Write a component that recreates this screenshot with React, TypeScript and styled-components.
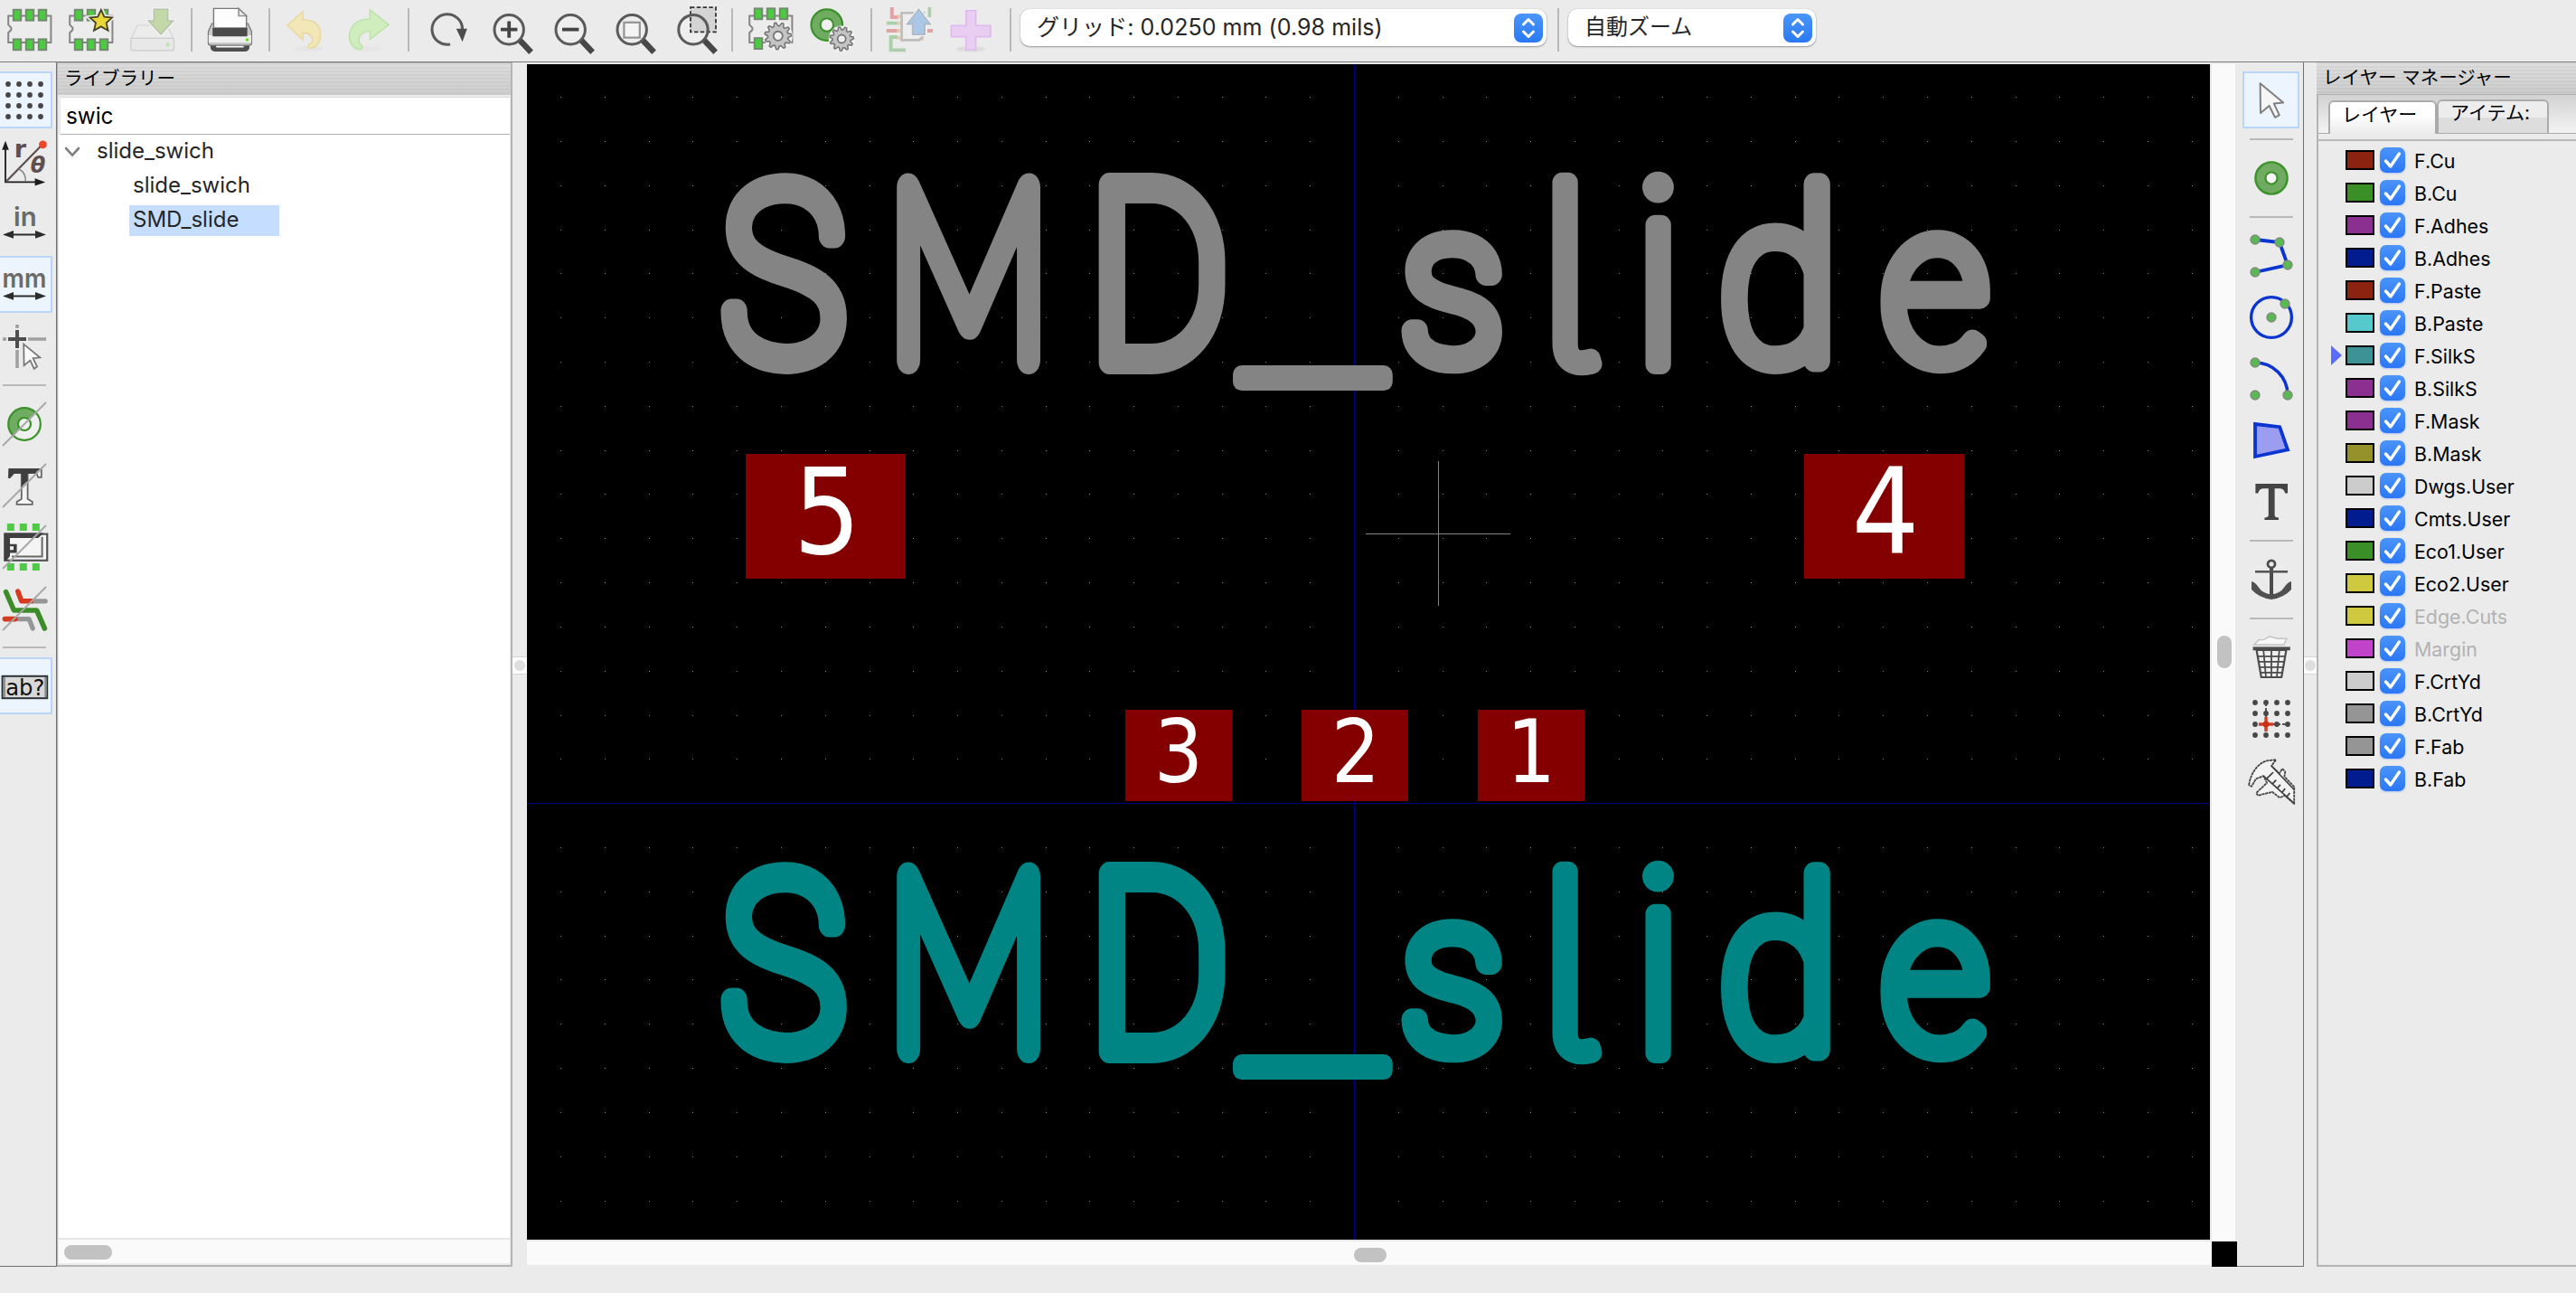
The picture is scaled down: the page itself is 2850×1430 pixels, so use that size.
import React from 'react';
import styled, { createGlobalStyle } from 'styled-components';

const UI_FONT = `Inter, "Noto Sans CJK JP", sans-serif`;

const GlobalStyle = createGlobalStyle`
  html, body { margin: 0; padding: 0; background: #ebebeb; }
  body { font-family: ${UI_FONT}; color: #1f1f1f; overflow: hidden; }
  * { box-sizing: border-box; }
`;

/* ---------- window frame ---------- */

const Window = styled.div`
  width: 2850px;
  height: 1430px;
  display: flex;
  flex-direction: column;
  background: #ebebeb;
`;

const TopBar = styled.header`
  height: 69px;
  flex: none;
  display: flex;
  align-items: flex-start;
  padding: 7px 0 0 6px;
  margin-left: -8px;
  border-bottom: 1px solid #7b7b7b;
`;

const Main = styled.main`
  height: 1332px;
  flex: none;
  display: flex;
`;

const IconSvg = styled.svg`
  width: 52px;
  height: 52px;
  display: block;
  flex: none;
  overflow: visible;
`;

const TopTool = styled.div<{ $dim?: boolean }>`
  margin: 0 8px;
  opacity: ${(p) => (p.$dim ? 0.4 : 1)};
`;

const TopSeparator = styled.div`
  width: 2px;
  height: 48px;
  margin: 2px 7px 0 9px;
  background: #b9b9b9;
`;

const Combo = styled.div<{ $width: number }>`
  width: ${(p) => p.$width}px;
  height: 41px;
  margin: 3px 3px 0;
  padding: 0 4px 0 18px;
  display: flex;
  align-items: center;
  justify-content: space-between;
  border-radius: 10px;
  background: #fff;
  box-shadow: 0 1px 2px rgba(0, 0, 0, 0.35), 0 0 1px rgba(0, 0, 0, 0.25);
  color: #262626;
  white-space: nowrap;
`;

const ComboText = styled.span<{ $size: number; $spacing: number }>`
  font-size: ${(p) => p.$size}px;
  letter-spacing: ${(p) => p.$spacing}px;
  line-height: 38px;
  padding-bottom: 2px;
`;

const Stepper = styled.svg`
  width: 32px;
  height: 32px;
  border-radius: 8px;
  background: linear-gradient(#4a96f8, #2a78f6);
`;

/* ---------- side tool strips ---------- */

const SideBar = styled.nav<{ $side: 'left' | 'right' }>`
  flex: none;
  width: ${(p) => (p.$side === 'left' ? 63 : 74)}px;
  padding: 10px 0 0 ${(p) => (p.$side === 'left' ? 0 : 2)}px;
  display: flex;
  flex-direction: column;
  align-items: ${(p) => (p.$side === 'left' ? 'flex-start' : 'center')};
  border-right: 1px solid #6f6f6f;
  border-bottom: 1px solid #6f6f6f;
`;

const SideTool = styled.div<{ $active?: boolean; $side: 'left' | 'right' }>`
  width: ${(p) => (p.$side === 'left' ? 58 : 63)}px;
  height: 63px;
  margin-bottom: 5px;
  display: flex;
  align-items: center;
  justify-content: center;
  padding: 0 ${(p) => (p.$side === 'left' ? 2 : 0)}px 0 0;
  border: 2px solid ${(p) => (p.$active ? '#b9d5f7' : 'transparent')};
  border-left-width: ${(p) => (p.$side === 'left' ? 0 : 2)}px;
  background: ${(p) => (p.$active ? '#ecf4fe' : 'transparent')};
`;

const SideSeparator = styled.div<{ $side: 'left' | 'right' }>`
  width: 48px;
  height: 2px;
  margin: 6px 0 10px ${(p) => (p.$side === 'left' ? 3 : 0)}px;
  background: #b9b9b9;
`;

/* ---------- library panel ---------- */

const LibraryPanel = styled.section`
  flex: none;
  width: 504px;
  display: flex;
  flex-direction: column;
  border: 1px solid #b4b4b4;
  border-width: 1px 2px 2px 1px;
  background: #ebebeb;
`;

const PanelTitle = styled.div<{ $indent: number }>`
  height: 35px;
  flex: none;
  padding-left: ${(p) => p.$indent}px;
  font-size: 20.5px;
  line-height: 34px;
  color: #000;
  background:
    repeating-linear-gradient(rgba(0, 0, 0, 0.035) 0 2px, transparent 2px 4px),
    linear-gradient(#dedede, #cdcdcd);
`;

const SearchField = styled.div`
  height: 42px;
  flex: none;
  margin: 2px 1px 0 3px;
  padding-left: 6px;
  background: #fff;
  border-top: 1px solid #dcdcdc;
  border-bottom: 1px solid #b0b0b0;
  font-size: 24.3px;
  line-height: 41px;
  color: #000;
`;

const Tree = styled.div`
  flex: 1;
  margin: 0 1px;
  background: #fff;
  color: #262626;
`;

const TreeRow = styled.div<{ $indent: number }>`
  height: 38px;
  padding-left: ${(p) => p.$indent}px;
  display: flex;
  align-items: center;
`;

const Chevron = styled.svg`
  width: 18px;
  height: 12px;
  margin-right: 14px;
`;

const TreeLabel = styled.span<{ $selected?: boolean }>`
  height: 34px;
  width: ${(p) => (p.$selected ? '166px' : 'auto')};
  padding: 0 4px;
  font-size: 24px;
  line-height: 32px;
  background: ${(p) => (p.$selected ? '#c5deff' : 'transparent')};
`;

const ListScroll = styled.div`
  height: 30px;
  flex: none;
  margin: 0 1px;
  padding: 6px 0 0 6px;
  border-top: 2px solid #e6e6e6;
  border-bottom: 2px solid #ededed;
  background: #fafafa;
`;

const Thumb = styled.div<{ $w: number; $h: number }>`
  width: ${(p) => p.$w}px;
  height: ${(p) => p.$h}px;
  border-radius: 8px;
  background: #c2c2c2;
`;

/* ---------- splitters ---------- */

const Splitter = styled.div<{ $width: number }>`
  flex: none;
  width: ${(p) => p.$width}px;
  padding-top: 657px;
`;

const SplitterGrip = styled.div`
  height: 20px;
  display: flex;
  align-items: center;
  justify-content: center;
  background: #fcfcfc;
  border-top: 1px solid #d5d5d5;
  border-bottom: 1px solid #d5d5d5;
  &::after {
    content: '';
    width: 12px;
    height: 12px;
    border-radius: 6px;
    background: #dedede;
  }
`;

/* ---------- drawing area ---------- */

const DrawingArea = styled.section`
  flex: none;
  width: 1892px;
  padding-top: 2px;
  display: grid;
  grid-template-columns: 1864px 28px;
  grid-template-rows: 1302px 28px;
`;

const Viewport = styled.div`
  border-right: 2px solid #e9e9e9;
  border-bottom: 2px solid #e6e6e6;
`;

const Board = styled.svg`
  width: 1862px;
  height: 1300px;
  display: block;
  background: #000;
`;

const VScroll = styled.div`
  padding: 632px 0 0 6px;
  background: #fafafa;
  border-right: 2px solid #ebebeb;
`;

const HScroll = styled.div`
  padding: 7px 0 0 915px;
  background: #fafafa;
  border-bottom: 2px solid #ebebeb;
`;

const Corner = styled.div`
  background: #000;
`;

const PadNumber = styled.text`
  font-family: "DejaVu Sans", sans-serif;
  fill: #fff;
  text-anchor: middle;
`;

/* ---------- layer manager ---------- */

const LayerPanel = styled.aside`
  flex: 1;
  display: flex;
  flex-direction: column;
  border-bottom: 2px solid #b4b4b4;
`;

const LayerBody = styled.div`
  flex: 1;
  border-left: 2px solid #b4b4b4;
`;

const TabStrip = styled.div`
  height: 44px;
  display: flex;
  align-items: flex-end;
  padding-left: 11px;
  border-top: 1px solid #b0b0b0;
  border-bottom: 1px solid #ababab;
  background: linear-gradient(#d2d2d2, #f3f3f3);
`;

const Tab = styled.div<{ $active?: boolean; $width: number; $indent: number }>`
  width: ${(p) => p.$width}px;
  height: 37px;
  margin-bottom: ${(p) => (p.$active ? -1 : 0)}px;
  padding-left: ${(p) => p.$indent}px;
  border: 2px solid #ababab;
  border-bottom: 0;
  border-radius: 6px 6px 0 0;
  font-size: 21px;
  line-height: ${(p) => (p.$active ? 28 : 25)}px;
  white-space: nowrap;
  color: #000;
  background: ${(p) =>
    p.$active
      ? 'linear-gradient(#ffffff 40%, #ebebeb)'
      : 'linear-gradient(#ededed 50%, #dddddd 50%)'};
`;

const TabRule = styled.div`
  height: 8px;
  border-bottom: 2px solid #b8b8b8;
  margin-bottom: 3px;
`;

const LayerRow = styled.div`
  height: 36px;
  display: flex;
  align-items: center;
  padding-left: 14px;
`;

const CurrentMark = styled.div<{ $on?: boolean }>`
  width: 12px;
  height: 22px;
  margin-right: 4px;
  background: ${(p) => (p.$on ? '#5a6bff' : 'transparent')};
  clip-path: polygon(0 0, 100% 50%, 0 100%);
`;

const Swatch = styled.div<{ $color: string }>`
  width: 32px;
  height: 22px;
  margin-right: 6px;
  border: 2px solid #000;
  background: ${(p) => p.$color};
`;

const CheckBox = styled.svg`
  width: 28px;
  height: 28px;
  margin-right: 10px;
  border-radius: 7px;
  background: linear-gradient(#4a94f9, #2b77f6);
  box-shadow: 0 1px 2px rgba(60, 120, 240, 0.35);
`;

const LayerName = styled.span<{ $muted?: boolean }>`
  font-size: 21.4px;
  line-height: 34px;
  padding-top: 1px;
  color: ${(p) => (p.$muted ? '#b2b2b2' : '#000')};
`;

/* ---------- icon drawings (26 unit grid) ---------- */

const Icon = ({ children }: { children: React.ReactNode }) => (
  <IconSvg viewBox="0 0 26 26" fill="none">
    {children}
  </IconSvg>
);

const Gear = ({ cx, cy, r }: { cx: number; cy: number; r: number }) => {
  const pts: string[] = [];
  for (let i = 0; i < 44; i++) {
    const a = (i / 44) * Math.PI * 2 - Math.PI / 22;
    const k = i % 4 < 2 ? r : r * 0.76;
    pts.push(`${(cx + Math.cos(a) * k).toFixed(2)},${(cy + Math.sin(a) * k).toFixed(2)}`);
  }
  return (
    <g>
      <circle cx={cx} cy={cy} r={r + 0.6} fill="#f4f4f4" />
      <polygon points={pts.join(' ')} fill="#c4c4c4" stroke="#777" strokeWidth={0.8} strokeLinejoin="round" />
      <circle cx={cx} cy={cy} r={r * 0.34} fill="#f0f0f0" stroke="#777" strokeWidth={0.9} />
    </g>
  );
};

const Chip = () => (
  <g>
    <path d="M1.6 5.3H25.2V20H1.6V14.6L3.2 13L3.2 11.8L1.6 10.2Z" fill="#ececec" stroke="#858585" strokeWidth={1} />
    {[4.4, 11.4, 18.4].map((x) => (
      <g key={x} fill="#4bcb3f" stroke="#728a6e" strokeWidth={1}>
        <rect x={x} y={1.9} width={4.2} height={5.9} />
        <rect x={x} y={18.2} width={4.2} height={5.9} />
      </g>
    ))}
  </g>
);

const ChipIcon = () => (
  <Icon>
    <Chip />
  </Icon>
);

const ChipStarIcon = () => (
  <Icon>
    <Chip />
    <path
      d="M18.9 1.4L20.7 5.8L25.2 6.2L21.8 9.2L22.9 13.8L18.9 11.4L14.9 13.8L16 9.2L12.6 6.2L17.1 5.8Z"
      fill="#e9d838"
      stroke="#ebebeb"
      strokeWidth={2.4}
    />
    <path
      d="M18.9 1.9L20.7 5.8L25 6.2L21.8 9.2L22.8 13.4L18.9 11.2L15 13.4L16 9.2L12.8 6.2L17.1 5.8Z"
      fill="#e9d838"
      stroke="#45411f"
      strokeWidth={0.9}
    />
  </Icon>
);

const SaveIcon = () => (
  <Icon>
    <path d="M5 10.5H21.5L25 18H1.5Z" fill="#efefef" stroke="#b5b5b5" strokeWidth={0.6} />
    <rect x={1.4} y={17.6} width={23.8} height={6.8} rx={1} fill="#e4e4e4" stroke="#aaa" strokeWidth={0.7} />
    <rect x={20.8} y={20.2} width={2} height={2} fill="#6fe05c" />
    <path d="M14.2 1.6H21.8V8H24.8L18 15.4L11.2 8H14.2Z" fill="#93cc55" stroke="#fff" strokeWidth={2} />
    <path d="M14.2 1.6H21.8V8H24.8L18 15.4L11.2 8H14.2Z" fill="#86bf44" stroke="#6a8a4a" strokeWidth={0.8} />
  </Icon>
);

const PrinterIcon = () => (
  <Icon>
    <path d="M2.4 20.5H24V22.5C24 24.5 22.5 25 21 25H5.5C4 25 2.4 24.5 2.4 22.5Z" fill="#4e4e4e" />
    <path d="M5 19.5H21.4L21 23H5.4Z" fill="#fafafa" stroke="#555" strokeWidth={0.6} />
    <path d="M3.2 9.5L1.2 14V20.3Q1.2 21.6 2.6 21.6H23.8Q25.2 21.6 25.2 20.3V14L23.2 9.5Z" fill="#c9c9c9" stroke="#777" strokeWidth={0.6} />
    <rect x={1.4} y={16} width={23.6} height={4} fill="#efefef" />
    <path d="M4 9.3H22.4V13.6H4Z" fill="#3c3c3c" />
    <path d="M4.2 12V1.2H18L22.3 5.3V12H4.2Z" fill="#fdfdfd" stroke="#777" strokeWidth={0.7} />
    <path d="M3.6 12H22.8V16.6H3.6Z" fill="#4a4a4a" />
    <path d="M18 1.2V5.3H22.3Z" fill="#e6e6e6" stroke="#888" strokeWidth={0.7} />
    <circle cx={22.7} cy={18.5} r={0.9} fill="#6bdd20" />
  </Icon>
);

const UndoIcon = () => (
  <Icon>
    <ellipse cx={14} cy={23.4} rx={8} ry={1.6} fill="#cfcfcf" opacity={0.5} />
    <path
      d="M2 10.5L10.5 3V7.4C17.5 7.4 20.3 11 20.3 16C20.3 20 18 22.5 14.8 23.2C13.3 23.4 13 21.6 14.3 21C16.6 19.8 17.2 15 10.5 14.6V18.4Z"
      fill="#fde36a"
      stroke="#e8bd2c"
      strokeWidth={0.8}
    />
  </Icon>
);

const RedoIcon = () => (
  <Icon>
    <ellipse cx={12} cy={23.4} rx={8} ry={1.6} fill="#cfcfcf" opacity={0.4} />
    <path
      d="M24 10.2L13.7 2V7C6 7 2.3 11.5 2.3 16.5C2.3 20.5 4.4 23 7.8 23.8C9.6 24 9.8 22 8.6 21.2C6.4 19.2 7.4 14 13.7 13.6V18.2Z"
      fill="#a8f07c"
      stroke="#7bd94c"
      strokeWidth={0.8}
    />
  </Icon>
);

const RefreshIcon = () => (
  <Icon>
    <path d="M15 21A8.4 8.4 0 1 1 21.8 13" stroke="#5a5a5a" strokeWidth={1.5} />
    <path d="M18.4 12.4H24.4L21.8 19.6Z" fill="#4d4d4d" />
  </Icon>
);

const LensHandle = () => <path d="M19.2 18.4L25.8 25.4" stroke="#474747" strokeWidth={3.2} />;

const Lens = () => (
  <g>
    <LensHandle />
    <circle cx={13.6} cy={12.9} r={8.1} fill="#eeeeee" stroke="#5a5a5a" strokeWidth={1.5} />
  </g>
);

const ZoomInIcon = () => (
  <Icon>
    <Lens />
    <path d="M13.6 8.2V17.4M9 12.8H18.2" stroke="#444" strokeWidth={1.9} />
  </Icon>
);
const ZoomOutIcon = () => (
  <Icon>
    <Lens />
    <path d="M9 12.8H18.2" stroke="#444" strokeWidth={1.9} />
  </Icon>
);
const ZoomFitIcon = () => (
  <Icon>
    <Lens />
    <rect x={9.2} y={8.9} width={8.7} height={8.4} fill="#f4f4f4" stroke="#949494" strokeWidth={1.1} />
  </Icon>
);
const ZoomAreaIcon = () => (
  <Icon>
    <LensHandle />
    <circle cx={13.5} cy={12.9} r={8.1} fill="#eeeeee" />
    <rect x={12} y={0.6} width={14} height={13.6} fill="#d4d4d4" stroke="#333" strokeWidth={0.9} strokeDasharray="2.2 1.2" />
    <circle cx={13.5} cy={12.9} r={8.1} stroke="#5a5a5a" strokeWidth={1.5} />
  </Icon>
);

const ChipGearIcon = () => (
  <Icon>
    <path d="M1.6 5.3H25.2V20H1.6V14.6L3.2 13L3.2 11.8L1.6 10.2Z" fill="#ececec" stroke="#858585" strokeWidth={1} />
    {[4.4, 11.4, 18.4].map((x) => (
      <rect key={x} x={x} y={1.2} width={4.2} height={5.9} fill="#4bcb3f" stroke="#728a6e" strokeWidth={1} />
    ))}
    <rect x={4.4} y={17.6} width={4.2} height={5.9} fill="#4bcb3f" stroke="#728a6e" strokeWidth={1} />
    <Gear cx={17.4} cy={16.4} r={7.4} />
  </Icon>
);

const PadGearIcon = () => (
  <Icon>
    <circle cx={10.4} cy={10.3} r={6.1} stroke="#3c922a" strokeWidth={6.2} />
    <circle cx={10.4} cy={10.3} r={6.1} stroke="#6fab60" strokeWidth={4} />
    <circle cx={10.4} cy={10.3} r={3} fill="#f0f0f0" />
    <Gear cx={18.6} cy={18} r={6.6} />
  </Icon>
);

const ExportIcon = () => (
  <Icon>
    <path d="M3.4 0.5V6H7" stroke="#d23c3c" strokeWidth={2} />
    <path d="M24.2 0.5V6" stroke="#4ca64c" strokeWidth={1.8} />
    <path d="M0.4 9.3H6.4M11 24.2H2.8V17H6.6" stroke="#4ca64c" strokeWidth={1.9} />
    <path d="M0.4 13.5H6.4M23 13.5H26" stroke="#d23c3c" strokeWidth={1.9} />
    <path d="M6.4 5.6H9M6.4 9.3H9M6.4 13.5H9M6.4 17.4H9M17 18H21" stroke="#f09a4a" strokeWidth={1.9} />
    <path d="M8.8 3.6H21V16L18.5 18.7H8.8Z" fill="#f2f2f2" stroke="#7a7a7a" strokeWidth={1.3} />
    <path d="M18.2 1.6L24.6 9.8H21.6V15.6H14.8V9.8H11.8Z" fill="#4c93e0" stroke="#fff" strokeWidth={2} />
    <path d="M18.2 1.6L24.6 9.8H21.6V15.6H14.8V9.8H11.8Z" fill="#4c93e0" stroke="#596f88" strokeWidth={0.8} />
  </Icon>
);

const PlusIcon = () => (
  <Icon>
    <ellipse cx={13} cy={23.6} rx={8} ry={1.6} fill="#cfcfcf" opacity={0.5} />
    <path d="M10.4 2.4H15.8V10.6H24V16.8H15.8V24H10.4V16.8H2.2V10.6H10.4Z" fill="#e8cff2" stroke="#dfb9ee" strokeWidth={0.8} />
  </Icon>
);

/* dotted grid used by the grid and origin tools */
const Dots = ({ at }: { at: number[] }) => (
  <g fill="#474747">
    {at.map((x) => at.map((y) => <circle key={`${x}-${y}`} cx={x} cy={y} r={1.45} />))}
  </g>
);

const GridIcon = () => (
  <Icon>
    <Dots at={[4, 10, 16, 22]} />
  </Icon>
);

const IconText = styled.text<{ $color: string; $weight?: number; $face?: string }>`
  font-family: ${(p) => p.$face ?? '"DejaVu Sans"'}, sans-serif;
  font-weight: ${(p) => p.$weight ?? 400};
  fill: ${(p) => p.$color};
`;

const PolarIcon = () => (
  <Icon>
    <path d="M2.5 3V24.2H21" stroke="#1c1c1c" strokeWidth={0.9} />
    <path d="M0.6 6.4L2.5 1.4L4.4 6.4ZM18.8 22.1L24.6 24.2L18.8 26.3Z" fill="#1c1c1c" />
    <path d="M2.8 24L22 4.4" stroke="#5e5050" strokeWidth={1.1} />
    <path d="M9.8 16.8Q14 19 13.6 24" stroke="#777" strokeWidth={0.7} />
    <circle cx={23.2} cy={3.4} r={2.2} fill="#f0442b" />
    <IconText x={7.4} y={10.6} fontSize={13.5} $color="#5e5050" $weight={700}>r</IconText>
    <IconText x={16.4} y={19.2} fontSize={12} $color="#5e5050" $weight={700} fontStyle="italic">θ</IconText>
  </Icon>
);

const UnitArrow = () => (
  <g>
    <path d="M4 19.2H22" stroke="#2c2c2c" strokeWidth={1} />
    <path d="M1 19.2L7 17V21.4ZM25 19.2L19 17V21.4Z" fill="#2c2c2c" />
  </g>
);

const InchIcon = () => (
  <Icon>
    <UnitArrow />
    <IconText x={7} y={14.6} fontSize={14.5} $color="#6a6a6a" $weight={600} $face="Inter" textLength={12.8} lengthAdjust="spacingAndGlyphs">in</IconText>
  </Icon>
);
const MmIcon = () => (
  <Icon>
    <UnitArrow />
    <IconText x={0.8} y={14.7} fontSize={14.5} $color="#6a6a6a" $weight={600} $face="Inter" textLength={24.4} lengthAdjust="spacingAndGlyphs">mm</IconText>
  </Icon>
);

const CursorShapeIcon = () => (
  <Icon>
    <path d="M1 9H3M15 9H25M9 1V3M9 15V25" stroke="#a0a0a0" strokeWidth={1.8} />
    <path d="M4 9H14M9 4V14" stroke="#4d4d4d" strokeWidth={2} />
    <path d="M12.6 11.8L21.6 19.2L17.8 19.6L20 24.2L18.4 25.4L16.2 20.8L12.8 23.6Z" fill="#fafafa" stroke="#777" strokeWidth={0.9} />
  </Icon>
);

const Slash = () => <path d="M1 25L25 1" stroke="#a6a6a6" strokeWidth={0.9} />;

const PadSketchIcon = () => (
  <Icon>
    <circle cx={13} cy={13} r={8.9} fill="#f0f0f0" />
    <path d="M6.6 19.4A9 9 0 0 1 19.4 6.6Z" fill="#6fab60" />
    <circle cx={13} cy={13} r={8.9} stroke="#3c922a" strokeWidth={1.1} />
    <circle cx={13} cy={13} r={3.5} fill="#f0f0f0" stroke="#3c922a" strokeWidth={1.1} />
    <Slash />
  </Icon>
);

const TextSketchIcon = () => (
  <Icon>
    <path d="M4.6 4H22.4V8.4H20.6L19.6 6H14.8V20.4L17.4 22V23.4H8.8V22L11.4 20.4V6H7.2L5 8.4H4.4Z" fill="#f4f4f4" stroke="#666" strokeWidth={0.9} />
    <path d="M4.4 3.6H21.6L18.6 6.4H14.8V10.4L11.4 13.6V6.4H7.4L4.9 9H4.2Z" fill="#3f3f3f" />
    <Slash />
  </Icon>
);

const OutlineSketchIcon = () => (
  <Icon>
    {[3.4, 10.4, 17.4].map((x) => (
      <g key={x} fill="#52c848">
        <rect x={x} y={0} width={4} height={4} />
        <rect x={x} y={22} width={4} height={4} />
      </g>
    ))}
    <rect x={2.2} y={5.8} width={23.4} height={14.6} fill="#f4f4f4" stroke="#555" strokeWidth={1.1} />
    <path d="M22.8 7.4V18.2H6" stroke="#666" strokeWidth={1} />
    <path d="M1.8 5.2H23.6L20.6 8H5V11.4H8.8V16.2H5V18L3 20.6H1.8Z" fill="#3f3f3f" />
    <rect x={5} y={12.6} width={2} height={2} fill="#eee" />
    <Slash />
  </Icon>
);

const TrackSketchIcon = () => (
  <Icon>
    <path d="M17.4 8.9H24.6M10 18.8H15.6L17.6 24" stroke="#969696" strokeWidth={2.6} strokeLinecap="round" strokeLinejoin="round" />
    <path d="M9.4 3.6L11.4 8.9H16.6M2.2 18.8H8" stroke="#d63a20" strokeWidth={2.8} strokeLinecap="round" strokeLinejoin="round" />
    <path d="M2.8 3.8L7.2 14H19.8L24.2 24" stroke="#3d8c2a" strokeWidth={2.8} strokeLinecap="round" strokeLinejoin="round" />
    <Slash />
  </Icon>
);

const AbIcon = () => (
  <Icon>
    <rect x={0.8} y={7.4} width={24.8} height={12.2} fill="#d8d8d8" stroke="#2b3234" strokeWidth={1} />
    <path d="M1.9 8V19M24.7 8V19" stroke="#8b9193" strokeWidth={1.2} />
    <IconText x={2.6} y={17.8} fontSize={12} $color="#111" textLength={21.6} lengthAdjust="spacingAndGlyphs">ab?</IconText>
  </Icon>
);

const ArrowIcon = () => (
  <Icon>
    <path d="M6.8 3.6L19.6 14.2L14.4 14.8L17.4 21.2L15 22.4L11.8 16L7 20Z" fill="#f6f6f6" stroke="#808080" strokeWidth={1} strokeLinejoin="round" />
  </Icon>
);

const PadIcon = () => (
  <Icon>
    <circle cx={13} cy={13} r={6} stroke="#3c922a" strokeWidth={6.8} />
    <circle cx={13} cy={13} r={6} stroke="#6fab60" strokeWidth={4.4} />
    <circle cx={13} cy={13} r={2.7} fill="#f6f6f6" />
  </Icon>
);

const Node = ({ x, y }: { x: number; y: number }) => (
  <circle cx={x} cy={y} r={2.4} fill="#57bb52" stroke="#7f8f7c" strokeWidth={0.9} />
);

const LineIcon = () => (
  <Icon>
    <path d="M4 4L17.5 5.5L22 18L4 22" stroke="#0a35d0" strokeWidth={1.9} />
    <Node x={4} y={4} />
    <Node x={17.5} y={5.5} />
    <Node x={22} y={18} />
    <Node x={4} y={22} />
  </Icon>
);
const CircleIcon = () => (
  <Icon>
    <circle cx={13} cy={13} r={11.2} stroke="#0a35d0" strokeWidth={1.7} />
    <Node x={13} y={13} />
    <Node x={20.5} y={5.5} />
  </Icon>
);
const ArcIcon = () => (
  <Icon>
    <path d="M4 4A18 18 0 0 1 22 22" stroke="#0a35d0" strokeWidth={1.8} />
    <Node x={4} y={4} />
    <Node x={4} y={22} />
    <Node x={22} y={22} />
  </Icon>
);
const PolygonIcon = () => (
  <Icon>
    <path d="M4 4L17.6 5.6L22 18.2L4 22Z" fill="#9a9df0" stroke="#0a35d0" strokeWidth={1.9} />
  </Icon>
);
const TextIcon = () => (
  <Icon>
    <path d="M4.2 3H22V8.2H20.6Q20 5.6 17.4 5.6H14.8V20.4Q14.8 21.6 17 21.8V23H9.2V21.8Q11.4 21.6 11.4 20.4V5.6H8.8Q6.2 5.6 5.6 8.2H4.2Z" fill="#444" />
  </Icon>
);
const AnchorIcon = () => (
  <Icon>
    <circle cx={13} cy={4.4} r={2} stroke="#4c4c4c" strokeWidth={1.4} />
    <path d="M13 6V22" stroke="#4c4c4c" strokeWidth={2} />
    <path d="M4 8.6H22" stroke="#555" strokeWidth={1.3} />
    <path d="M2 14V18.5Q6 23 13 24Q20 23 24 18.5V14Q21.8 14.6 20 17.4Q18 20.6 13 21.2Q8 20.6 6 17.4Q4.2 14.6 2 14Z" fill="#505050" />
  </Icon>
);
const TrashIcon = () => (
  <Icon>
    <path d="M3.4 6L6 3.4L9 3.2L12 1.4L16 2.6H21.4L20 6Z" fill="#f8f8f8" stroke="#c4c4c4" strokeWidth={0.7} />
    <rect x={2.8} y={7.2} width={20.6} height={1.9} fill="#4c4c4c" />
    <path d="M4.8 9L7.4 24H18.6L21.2 9Z" fill="#f0f0f0" stroke="#4c4c4c" strokeWidth={1.1} />
    <path d="M8.6 9L10 24M13 9V24M17.4 9L16 24M5.6 12.4H20.4M6 15.4H20M6.6 18.4H19.4M7 21.4H19" stroke="#4c4c4c" strokeWidth={0.9} />
  </Icon>
);
const OriginIcon = () => (
  <Icon>
    <path d="M10 4V16H22" stroke="#555" strokeWidth={1} strokeDasharray="2 1" />
    <Dots at={[4, 10, 16, 22]} />
    <path d="M6 16H14M10 12V20" stroke="#d63a20" strokeWidth={1.7} />
    <circle cx={10} cy={16} r={1.7} fill="#c83018" />
  </Icon>
);
const CaliperIcon = () => (
  <Icon>
    <path
      d="M0.6 15.6C1.5 9 5.5 3.6 10.4 2.2L15.6 1.6L13 5L17.4 9.2L19 6.6L20.6 8.2L20.2 11L25.6 16.6V26L20.4 21.4L17.6 22.6L13.4 19.4L5.6 21.4L4.6 20L10.6 14.4L8.6 10.6L4.4 12.2L2 16.4Z"
      fill="#f3f3f3"
      stroke="#444"
      strokeWidth={0.9}
      strokeLinejoin="round"
      strokeDasharray="1.6 0.3"
    />
    <path d="M8.6 10.6L25.4 25.6M13 5L25.4 18M10 12.4L14 8.6M13.4 15.2L15.6 12.8M16 17.6L18 15.4M18.6 20L20.6 17.6M21.2 22.4L23.2 20" stroke="#444" strokeWidth={0.9} />
  </Icon>
);

/* ---------- footprint drawing ---------- */

interface Glyph {
  ch: string;
  face: string;
  x0: number;
  x1: number;
  y0: number;
  y1: number;
  /* keeps the glyph's own proportions: aligned to x0, or centred */
  keep?: 'left' | 'center';
  tail?: boolean;
}

/* bounding box of every silkscreen character, in board pixels */
const SILK: Glyph[] = [
  { ch: 'S', face: 'Roboto', x0: 797, x1: 938, y0: 190, y1: 414 },
  { ch: 'M', face: 'Lato', x0: 992, x1: 1151, y0: 190, y1: 414 },
  { ch: 'D', face: 'Roboto', x0: 1215, x1: 1356, y0: 190, y1: 414 },
  { ch: '_', face: 'Inter', x0: 1364, x1: 1542, y0: 404, y1: 433 },
  { ch: 's', face: 'Roboto', x0: 1550, x1: 1663, y0: 255, y1: 414 },
  { ch: 'l', face: 'Inter', x0: 1717, x1: 1746, y0: 190, y1: 414, keep: 'left', tail: true },
  { ch: 'i', face: 'Inter', x0: 1820, x1: 1849, y0: 190, y1: 414, keep: 'center' },
  { ch: 'd', face: 'Roboto', x0: 1903, x1: 2025, y0: 190, y1: 414 },
  { ch: 'e', face: 'Roboto', x0: 2080, x1: 2202, y0: 255, y1: 414 },
];

const LINE = 29; // silkscreen line thickness on the board
const HAIR = 5; // stem of the thin faces at 200px

const SilkGlyph = styled.text<{ $face: string; $tail?: boolean }>`
  font-family: "${(p) => p.$face}", sans-serif;
  font-weight: 100;
  font-size: 200px;
  font-feature-settings: ${(p) => (p.$tail ? '"cv05" 1' : 'normal')};
  stroke-linejoin: round;
  stroke-linecap: round;
`;

const fit = (g: Glyph) => {
  const ctx = document.createElement('canvas').getContext('2d')!;
  ctx.font = `100 200px "${g.face}"`;
  const m = ctx.measureText(g.ch);
  const w = m.actualBoundingBoxRight + m.actualBoundingBoxLeft;
  const h = m.actualBoundingBoxAscent + m.actualBoundingBoxDescent;
  const X = g.x1 - g.x0;
  const Y = g.y1 - g.y0;
  const pen = g.keep ? (LINE * h - HAIR * Y) / (Y - LINE) : (LINE * w - HAIR * X) / (X - LINE);
  const sx = g.keep ? Y / (h + pen) : X / (w + pen);
  const sy = g.ch === '_' ? sx : Y / (h + pen);
  const left =
    g.keep === 'center' ? (g.x0 + g.x1) / 2 - (w * sx) / 2 : g.x0 + (pen * sx) / 2;
  const tx = left + m.actualBoundingBoxLeft * sx;
  const ty = (g.y0 + g.y1) / 2 - (h * sy) / 2 + m.actualBoundingBoxAscent * sy;
  return { transform: `matrix(${sx} 0 0 ${sy} ${tx} ${ty})`, strokeWidth: pen };
};

const SilkText = ({ color, dy }: { color: string; dy: number }) => (
  <g transform={`translate(0 ${dy})`} fill={color} stroke={color}>
    {SILK.map((g, i) => (
      <SilkGlyph key={i} $face={g.face} $tail={g.tail} {...fit(g)}>
        {g.ch}
      </SilkGlyph>
    ))}
  </g>
);

const PADS = [
  { n: '5', x: 825, y: 502, w: 177, h: 138, cx: 915, base: 612, size: 132 },
  { n: '4', x: 1996, y: 502, w: 177, h: 138, cx: 2086, base: 612, size: 132 },
  { n: '3', x: 1245, y: 785, w: 118, h: 101, cx: 1304, base: 865, size: 96 },
  { n: '2', x: 1440, y: 785, w: 118, h: 101, cx: 1500, base: 865, size: 96 },
  { n: '1', x: 1635, y: 785, w: 118, h: 101, cx: 1694, base: 865, size: 96 },
];

const GridDots = () => {
  const dots: React.ReactNode[] = [];
  for (let i = -18; i <= 19; i++) {
    for (let j = -16; j <= 9; j++) {
      if (i === 0 || j === 0) continue;
      dots.push(
        <rect key={`${i},${j}`} x={Math.round(1498 + i * 48.77)} y={Math.round(888.2 + j * 48.82)} width={1} height={1} />
      );
    }
  }
  return <g fill="#848484">{dots}</g>;
};

const Footprint = () => (
  <Board viewBox="583 71 1862 1300">
    <GridDots />
    <path d="M1498.5 71V1371M583 888.5H2445" stroke="#000084" strokeWidth={1} />
    {PADS.map((p) => (
      <g key={p.n}>
        <rect x={p.x} y={p.y} width={p.w} height={p.h} fill="#840000" />
        <PadNumber transform={`translate(${p.cx} ${p.base}) scale(0.89 1)`} fontSize={p.size}>
          {p.n}
        </PadNumber>
      </g>
    ))}
    <SilkText color="#848484" dy={0} />
    <SilkText color="#008484" dy={762} />
    <path d="M1511 590.5H1671M1591.5 510V670" stroke="#848484" strokeWidth={1} />
  </Board>
);

/* ---------- data ---------- */

const LAYERS: { name: string; color: string; muted?: boolean; current?: boolean }[] = [
  { name: 'F.Cu', color: '#8c2311' },
  { name: 'B.Cu', color: '#3a8f26' },
  { name: 'F.Adhes', color: '#8b2f91' },
  { name: 'B.Adhes', color: '#001c8f' },
  { name: 'F.Paste', color: '#8c2311' },
  { name: 'B.Paste', color: '#56c9cc' },
  { name: 'F.SilkS', color: '#3c9294', current: true },
  { name: 'B.SilkS', color: '#8b2f91' },
  { name: 'F.Mask', color: '#8b2f91' },
  { name: 'B.Mask', color: '#95922b' },
  { name: 'Dwgs.User', color: '#cccccc' },
  { name: 'Cmts.User', color: '#001c8f' },
  { name: 'Eco1.User', color: '#3a8f26' },
  { name: 'Eco2.User', color: '#cec93e' },
  { name: 'Edge.Cuts', color: '#cec93e', muted: true },
  { name: 'Margin', color: '#c143c9', muted: true },
  { name: 'F.CrtYd', color: '#cccccc' },
  { name: 'B.CrtYd', color: '#959595' },
  { name: 'F.Fab', color: '#959595' },
  { name: 'B.Fab', color: '#001c8f' },
];

type Tool = React.ComponentType | 'sep';
const LEFT_TOOLS: Tool[] = [
  GridIcon, PolarIcon, InchIcon, MmIcon, CursorShapeIcon, 'sep',
  PadSketchIcon, TextSketchIcon, OutlineSketchIcon, TrackSketchIcon, 'sep', AbIcon,
];
const RIGHT_TOOLS: Tool[] = [
  ArrowIcon, 'sep', PadIcon, 'sep', LineIcon, CircleIcon, ArcIcon, PolygonIcon, TextIcon, 'sep',
  AnchorIcon, 'sep', TrashIcon, OriginIcon, CaliperIcon,
];
const TOP_TOOLS: Tool[] = [
  ChipIcon, ChipStarIcon, SaveIcon, 'sep', PrinterIcon, 'sep', UndoIcon, RedoIcon, 'sep',
  RefreshIcon, ZoomInIcon, ZoomOutIcon, ZoomFitIcon, ZoomAreaIcon, 'sep',
  ChipGearIcon, PadGearIcon, 'sep', ExportIcon, PlusIcon, 'sep',
];
const ACTIVE: Tool[] = [GridIcon, MmIcon, AbIcon, ArrowIcon];
const DISABLED: Tool[] = [SaveIcon, ExportIcon, UndoIcon, RedoIcon];

const ToolStrip = ({ side, tools }: { side: 'left' | 'right'; tools: Tool[] }) => (
  <SideBar $side={side}>
    {tools.map((T, i) =>
      T === 'sep' ? (
        <SideSeparator key={i} $side={side} />
      ) : (
        <SideTool key={i} $side={side} $active={ACTIVE.includes(T)}>
          <T />
        </SideTool>
      )
    )}
  </SideBar>
);

const ComboBox = ({ text, width, size, spacing = 0 }: { text: string; width: number; size: number; spacing?: number }) => (
  <Combo $width={width}>
    <ComboText $size={size} $spacing={spacing}>{text}</ComboText>
    <Stepper viewBox="0 0 32 32" fill="none" stroke="#fff" strokeWidth={3} strokeLinecap="round" strokeLinejoin="round">
      <path d="M10.5 12L16 6.5L21.5 12M10.5 20L16 25.5L21.5 20" />
    </Stepper>
  </Combo>
);

export default function App() {
  return (
    <>
      <GlobalStyle />
      <Window>
        <TopBar>
          {TOP_TOOLS.map((T, i) =>
            T === 'sep' ? (
              <TopSeparator key={i} />
            ) : (
              <TopTool key={i} $dim={DISABLED.includes(T)}>
                <T />
              </TopTool>
            )
          )}
          <ComboBox text="グリッド: 0.0250 mm (0.98 mils)" width={582} size={25} spacing={0.05} />
          <TopSeparator />
          <ComboBox text="自動ズーム" width={274} size={24} />
        </TopBar>
        <Main>
          <ToolStrip side="left" tools={LEFT_TOOLS} />
          <LibraryPanel>
            <PanelTitle $indent={7}>ライブラリー</PanelTitle>
            <SearchField>swic</SearchField>
            <Tree>
              <TreeRow $indent={6}>
                <Chevron viewBox="0 0 18 12" fill="none" stroke="#808080" strokeWidth={2.6} strokeLinecap="round">
                  <path d="M2 2L9 9.6L16 2" />
                </Chevron>
                <TreeLabel>slide_swich</TreeLabel>
              </TreeRow>
              <TreeRow $indent={78}>
                <TreeLabel>slide_swich</TreeLabel>
              </TreeRow>
              <TreeRow $indent={78}>
                <TreeLabel $selected>SMD_slide</TreeLabel>
              </TreeRow>
            </Tree>
            <ListScroll>
              <Thumb $w={53} $h={16} />
            </ListScroll>
          </LibraryPanel>
          <Splitter $width={16}>
            <SplitterGrip />
          </Splitter>
          <DrawingArea>
            <Viewport>
              <Footprint />
            </Viewport>
            <VScroll>
              <Thumb $w={16} $h={36} />
            </VScroll>
            <HScroll>
              <Thumb $w={36} $h={16} />
            </HScroll>
            <Corner />
          </DrawingArea>
          <ToolStrip side="right" tools={RIGHT_TOOLS} />
          <Splitter $width={14}>
            <SplitterGrip />
          </Splitter>
          <LayerPanel>
            <PanelTitle $indent={7}>レイヤー マネージャー</PanelTitle>
            <LayerBody>
              <TabStrip>
                <Tab $active $width={120} $indent={13}>レイヤー</Tab>
                <Tab $width={124} $indent={13}>アイテム:</Tab>
              </TabStrip>
              <TabRule />
              {LAYERS.map((l) => (
                <LayerRow key={l.name}>
                  <CurrentMark $on={l.current} />
                  <Swatch $color={l.color} />
                  <CheckBox viewBox="0 0 28 28" fill="none" stroke="#fff" strokeWidth={3.4} strokeLinecap="round" strokeLinejoin="round">
                    <path d="M6.5 15L11.8 21L21.4 7" />
                  </CheckBox>
                  <LayerName $muted={l.muted}>{l.name}</LayerName>
                </LayerRow>
              ))}
            </LayerBody>
          </LayerPanel>
        </Main>
      </Window>
    </>
  );
}
